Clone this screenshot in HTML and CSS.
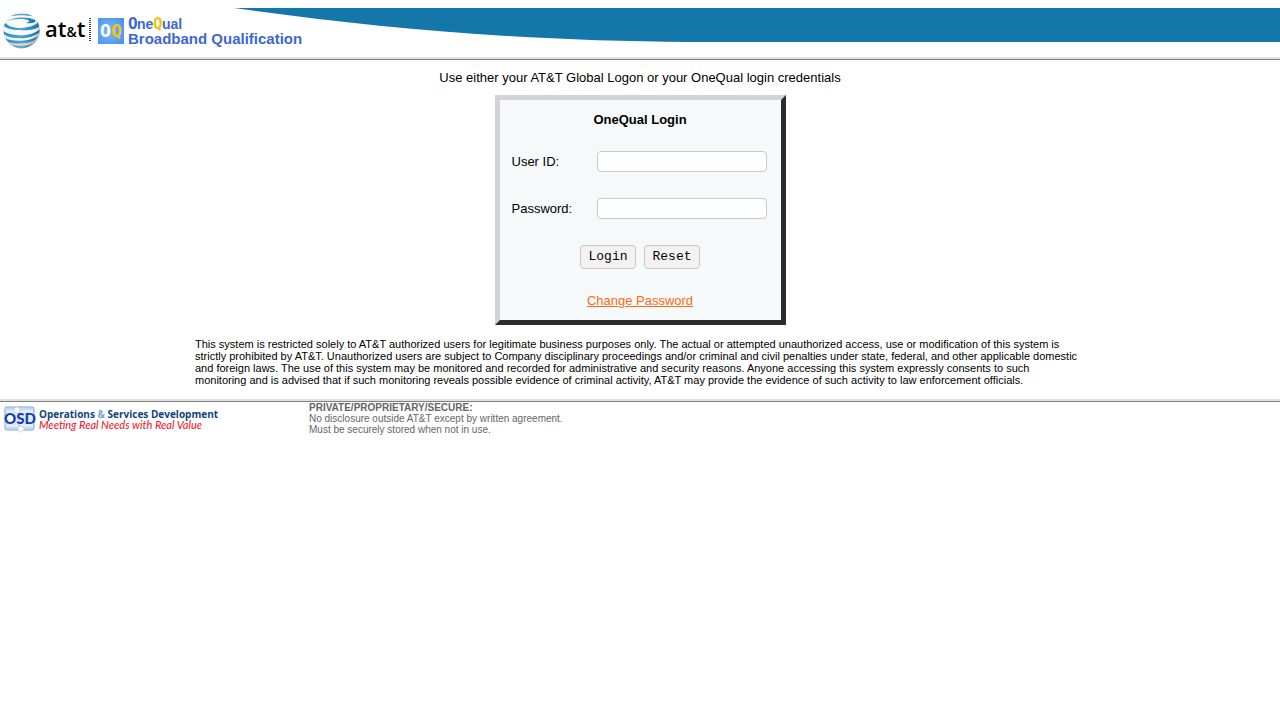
FILE: index.html
```html
<!DOCTYPE html>
<html lang="en">
<head>
<meta charset="utf-8">
<title>OneQual Login</title>
<link rel="stylesheet" href="styles.css">
</head>
<body>
<header class="banner">
  <svg class="banner-art" width="735" height="49" viewBox="0 0 735 49" role="img" aria-label="AT&amp;T OneQual Broadband Qualification">
    <defs>
      <radialGradient id="globe" cx="45%" cy="38%" r="62%">
        <stop offset="0" stop-color="#fff"/>
        <stop offset=".75" stop-color="#f0f1f2"/>
        <stop offset="1" stop-color="#a0a4a7"/>
      </radialGradient>
      <linearGradient id="stripe" x1="0" x2="1" y1="0" y2="0">
        <stop offset="0" stop-color="#2b8fc0"/>
        <stop offset=".5" stop-color="#4aa6d0"/>
        <stop offset="1" stop-color="#1272a6"/>
      </linearGradient>
      <radialGradient id="tile" cx="45%" cy="50%" r="70%">
        <stop offset="0" stop-color="#7fb9ff"/>
        <stop offset="1" stop-color="#4690f0"/>
      </radialGradient>
      <clipPath id="ball"><circle cx="21.500" cy="22" r="18"/></clipPath>
    </defs>
    <path d="M234 0H735V34H690C520 33 375 20 234 0Z" fill="#1477aa"/>
    <circle cx="21.500" cy="22" r="18.500" fill="url(#globe)"/>
    <g clip-path="url(#ball)" fill="url(#stripe)">
      <path d="M11 8C17 5 27 5 32 8C26 7 17 7 11 8Z"/>
      <path d="M7 13C13 9 28 8 35 12C37 14 32 16 26 15C31 13 30 12 23 11C17 11 11 11 7 13Z"/>
      <path d="M3 17L6 15C7 18 14 20 22 20C31 19 36 17 38 14L40 18C36 22 26 23 19 22C12 22 5 20 3 17Z"/>
      <path d="M3 23C9 27 19 28 26 27C33 26 38 23 40 21V24C34 29 25 31 18 30C11 30 5 28 3 25Z"/>
      <path d="M5 30C11 34 29 34 38 28L36 31C28 37 14 36 8 34Z"/>
      <path d="M12 37C18 39 25 39 33 36C27 41 17 41 12 37Z"/>
    </g>
    <text class="att" x="45" y="29">at<tspan class="amp">&amp;</tspan>t</text>
    <path d="M90 10V34" stroke="#444" stroke-width="2" stroke-dasharray="1 1"/>
    <rect x="98" y="10" width="26" height="26" fill="url(#tile)"/>
    <text class="tile-letter white" x="100" y="29">O</text>
    <text class="tile-letter gold" x="111" y="29">Q</text>
    <text class="tall blue" x="128" y="21">O</text>
    <text class="name blue" x="137" y="21">ne</text>
    <text class="tall gold" x="153" y="21">Q</text>
    <text class="name blue" x="162" y="21">ual</text>
    <text class="sub blue" x="128" y="36">Broadband Qualification</text>
  </svg>
  <div class="banner-fill"></div>
</header>
<main class="content">
  <p class="hint">Use either your AT&amp;T Global Logon or your OneQual login credentials</p>
  <form class="login">
    <h1 class="login-title">OneQual Login</h1>
    <div class="fields">
      <label for="user">User ID:</label>
      <input class="field" id="user" type="text">
      <label for="password">Password:</label>
      <input class="field" id="password" type="password">
    </div>
    <div class="actions">
      <button class="btn" type="submit">Login</button>
      <button class="btn" type="reset">Reset</button>
    </div>
    <a class="change" href="#">Change Password</a>
  </form>
  <p class="notice">This system is restricted solely to AT&amp;T authorized users for legitimate business purposes only. The actual or attempted unauthorized access, use or modification of this system is strictly prohibited by AT&amp;T. Unauthorized users are subject to Company disciplinary proceedings and/or criminal and civil penalties under state, federal, and other applicable domestic and foreign laws. The use of this system may be monitored and recorded for administrative and security reasons. Anyone accessing this system expressly consents to such monitoring and is advised that if such monitoring reveals possible evidence of criminal activity, AT&amp;T may provide the evidence of such activity to law enforcement officials.</p>
</main>
<footer class="footer">
  <svg class="osd" width="225" height="34" viewBox="0 0 225 34" role="img" aria-label="Operations &amp; Services Development">
    <rect x="5" y="5" width="29" height="23" rx="2" fill="#e3edfa"/>
    <path d="M6 7H33M6 26H33M19 5V28" stroke="#a9c4ea" fill="none"/>
    <path d="M5 15V6Q5 5 6 5H32Q34 5 34 7V26Q34 28 32 28H7Q5 28 5 26Z" stroke="#7ba0dc" fill="none"/>
    <g fill="#fff" stroke="#b9c3d0" stroke-dasharray="2 1">
      <circle cx="17" cy="8" r="3"/><circle cx="9" cy="17" r="5"/><circle cx="21" cy="27" r="3"/>
    </g>
    <text class="osd-mark" x="4" y="22">OSD</text>
    <text class="osd-name" x="39" y="16">Operations <tspan class="osd-amp">&amp;</tspan> Services Development</text>
    <text class="osd-motto" x="39" y="27">Meeting Real Needs with Real Value</text>
  </svg>
  <p class="secure"><strong>PRIVATE/PROPRIETARY/SECURE:</strong><br>No disclosure outside AT&amp;T except by written agreement.<br>Must be securely stored when not in use.</p>
</footer>
</body>
</html>
```
FILE: styles.css
```css
* { box-sizing: border-box; }
body {
  margin: 0;
  background: #fff;
  color: #000;
  font: 13px/15px "Liberation Sans", Arial, sans-serif;
}
p, h1 { margin: 0; }
.banner {
  display: flex;
  padding-top: 8px;
  border-bottom: 1px solid #808080;
  box-shadow: inset 0 -2px #e0e0e0;
  padding-bottom: 2px;
}
.banner-art { display: block; flex: none; }
.banner-fill { flex: 1; height: 34px; background: #1477aa; }

.att { font: 600 22px "Open Sans", sans-serif; }
.amp { font-size: 14px; }
.blue { fill: #3c68cf; }
.gold { fill: #f4c50c; }
.white { fill: #fff; }
.tall { font: bold 16px "DejaVu Sans Mono", monospace; }
.tile-letter { font: bold 18px "DejaVu Sans Mono", monospace; }
.name { font: bold 14px "Liberation Sans", sans-serif; }
.sub { font: bold 15px "Liberation Sans", sans-serif; }

.content {
  display: flex;
  flex-direction: column;
  align-items: center;
  padding: 10px 16px 15px;
}
.hint { margin-bottom: 10px; }
.login {
  display: flex;
  flex-direction: column;
  align-items: center;
  padding: 12px;
  border: 5px solid;
  border-color: #d3d3d3 #2c2c2e #2c2c2e #d3d3d3;
  background: #f5f9fa;
}
.login-title { font-size: 13px; line-height: 15px; margin-bottom: 24px; }
.fields {
  display: grid;
  grid-template-columns: 73px 170px;
  column-gap: 12px;
  row-gap: 26px;
  align-items: center;
  padding-right: 2px;
}
.field {
  width: 100%;
  height: 21px;
  padding: 1px 4px;
  border: 1px solid #cdc7c2;
  border-radius: 4px;
  background: #fff;
  font: 13px "Liberation Mono", monospace;
}
.actions { display: flex; gap: 8px; margin: 26px 0 24px; }
.btn {
  min-width: 56px;
  height: 24px;
  padding: 0 7px;
  border: 1px solid #cdc7c2;
  border-radius: 4px;
  background: #f3f2f0;
  color: #000;
  font: 13px/22px "Liberation Mono", monospace;
}
.change { color: #ff6a13; }
.notice {
  width: 100%;
  max-width: 890px;
  margin-top: 13px;
  padding-right: 5px;
  font-size: 11px;
  line-height: 12px;
}
.footer {
  display: flex;
  gap: 84px;
  border-top: 1px solid #808080;
  box-shadow: 0 -2px #e0e0e0;
}
.osd { display: block; flex: none; }
.secure { color: #666; font-size: 10px; line-height: 11px; }
.osd-mark { font: 900 15px Lato, sans-serif; fill: #123fae; }
.osd-name { font: 700 10px "Open Sans", sans-serif; fill: #11437e; }
.osd-amp { fill: #7ba6d2; }
.osd-motto { font: italic 500 11px Lato, sans-serif; fill: #f01f36; }
```
